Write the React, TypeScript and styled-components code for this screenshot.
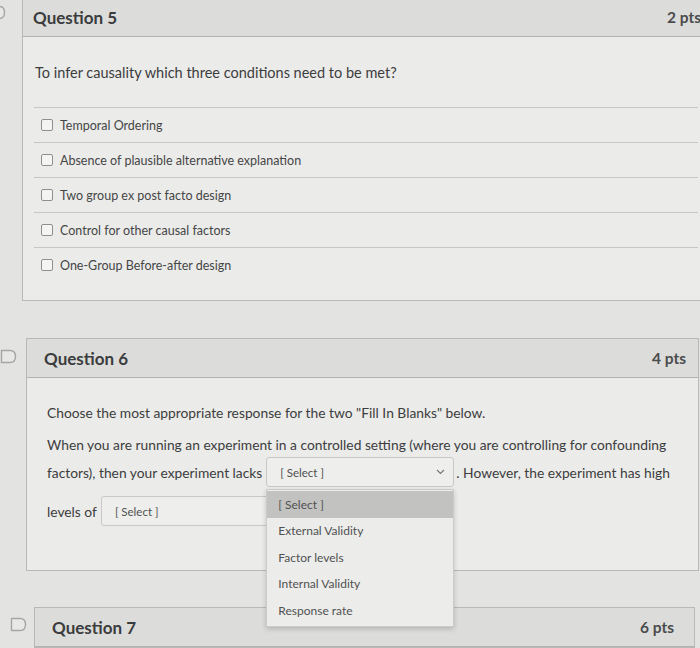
import { createGlobalStyle } from "styled-components"
import styled from "styled-components"

const GlobalStyle = createGlobalStyle`
  html, body {
    margin: 0;
    padding: 0;
    background: #e3e3e1;
    overflow: hidden;
  }
  body {
    font-family: Lato, "Open Sans", sans-serif;
    color: #3a3b3c;
  }
`

const Page = styled.div`
  width: 700px;
  height: 648px;
  overflow: hidden;
`

const QuestionRow = styled.div<{ $flagLeft: number; $flagTop: number; $gap: number; $top: number }>`
  display: flex;
  align-items: flex-start;
  margin-top: ${(p) => p.$top}px;
  margin-left: ${(p) => p.$flagLeft}px;

  & > svg {
    flex: none;
    margin-top: ${(p) => p.$flagTop}px;
    margin-right: ${(p) => p.$gap}px;
  }
`

const Card = styled.div<{ $width: number }>`
  flex: none;
  width: ${(p) => p.$width}px;
  border: 1px solid #b8b8b6;
  background: #ebebe9;
`

const Header = styled.div<{ $padLeft: number; $padRight: number }>`
  height: 38px;
  display: flex;
  align-items: center;
  justify-content: space-between;
  padding: 0 ${(p) => p.$padRight}px 0 ${(p) => p.$padLeft}px;
  background: #dcdcda;
  border-bottom: 1px solid #b3b3b1;
`

const Title = styled.div`
  font-size: 17px;
  font-weight: 700;
  color: #3b3c3d;
`

const Points = styled.div`
  font-size: 15.5px;
  font-weight: 700;
  color: #4b4c4d;
`

const Body5 = styled.div`
  padding: 24px 15px 18px 11px;
`

const Prompt = styled.div`
  height: 24px;
  line-height: 24px;
  font-size: 14.5px;
  color: #3c3d3e;
  margin-bottom: 22px;
  padding-left: 1px;
`

const Option = styled.label`
  display: flex;
  align-items: center;
  height: 35px;
  border-top: 1px solid #c6c6c4;
  padding-left: 7px;
  font-size: 12.5px;
  color: #454647;
  box-sizing: border-box;
`

const Box = styled.span`
  width: 10px;
  height: 10px;
  border: 1px solid #8e8f90;
  border-radius: 2px;
  background: #f4f4f2;
  margin-right: 7px;
`

const Body6 = styled.div`
  padding: 22px 20px 44px 20px;
  font-size: 13.8px;
  color: #3c3d3e;
`

const Line = styled.div<{ $h: number; $mb: number }>`
  display: flex;
  align-items: center;
  height: ${(p) => p.$h}px;
  margin-bottom: ${(p) => p.$mb}px;
  white-space: nowrap;
`

const SelectWrap = styled.div`
  position: relative;
  margin: 0 2px 0 4px;
`

const Select = styled.div`
  width: 188px;
  height: 30px;
  box-sizing: border-box;
  display: flex;
  align-items: center;
  justify-content: space-between;
  padding: 0 8px 0 13px;
  border: 1px solid #c8c8c6;
  border-radius: 3px;
  background: #eeeeec;
  font-size: 11.5px;
  color: #505152;
`

const Menu = styled.div`
  position: absolute;
  top: 32px;
  left: 0;
  width: 186px;
  z-index: 5;
  background: #ececea;
  border: 1px solid #cbcbc9;
  box-shadow: 0 2px 5px rgba(0, 0, 0, 0.18);
  padding: 1px 0 2px;
`

const MenuItem = styled.div<{ $active?: boolean }>`
  height: 26.5px;
  display: flex;
  align-items: center;
  padding-left: 11px;
  font-size: 12px;
  color: #505152;
  background: ${(p) => (p.$active ? "#c2c2c0" : "transparent")};
`

const Flag = () => (
  <svg width="17" height="15" viewBox="0 0 17 15">
    <path
      d="M1.5 1.5 H10 Q15.5 1.5 15.5 7.5 Q15.5 13.5 10 13.5 H1.5 Z"
      fill="#e8e8e6"
      stroke="#a5a6a7"
      strokeWidth="1.4"
      strokeLinejoin="round"
    />
  </svg>
)

const Chevron = () => (
  <svg width="9" height="6" viewBox="0 0 9 6">
    <path d="M1 1 L4.5 4.5 L8 1" fill="none" stroke="#777" strokeWidth="1.2" />
  </svg>
)

const options = [
  "Temporal Ordering",
  "Absence of plausible alternative explanation",
  "Two group ex post facto design",
  "Control for other causal factors",
  "One-Group Before-after design",
]

const choices = ["External Validity", "Factor levels", "Internal Validity", "Response rate"]

export default function App() {
  return (
    <Page>
      <GlobalStyle />
      <QuestionRow $top={-3} $flagLeft={-11} $flagTop={8} $gap={16}>
        <Flag />
        <Card $width={690}>
          <Header $padLeft={10} $padRight={12}>
            <Title>Question 5</Title>
            <Points>2 pts</Points>
          </Header>
          <Body5>
            <Prompt>To infer causality which three conditions need to be met?</Prompt>
            {options.map((o) => (
              <Option key={o}>
                <Box />
                {o}
              </Option>
            ))}
          </Body5>
        </Card>
      </QuestionRow>

      <QuestionRow $top={37} $flagLeft={0} $flagTop={11} $gap={9}>
        <Flag />
        <Card $width={671}>
          <Header $padLeft={17} $padRight={12}>
            <Title>Question 6</Title>
            <Points>4 pts</Points>
          </Header>
          <Body6>
            <Line $h={24} $mb={10}>Choose the most appropriate response for the two "Fill In Blanks" below.</Line>
            <Line $h={20} $mb={3}>
              When you are running an experiment in a controlled setting (where you are controlling for confounding
            </Line>
            <Line $h={30} $mb={9}>
              factors), then your experiment lacks
              <SelectWrap>
                <Select>
                  [ Select ]
                  <Chevron />
                </Select>
                <Menu>
                  <MenuItem $active>[ Select ]</MenuItem>
                  {choices.map((c) => (
                    <MenuItem key={c}>{c}</MenuItem>
                  ))}
                </Menu>
              </SelectWrap>
              . However, the experiment has high
            </Line>
            <Line $h={30} $mb={0}>
              levels of
              <SelectWrap>
                <Select>
                  [ Select ]
                  <Chevron />
                </Select>
              </SelectWrap>
            </Line>
          </Body6>
        </Card>
      </QuestionRow>

      <QuestionRow $top={36} $flagLeft={10} $flagTop={10} $gap={7}>
        <Flag />
        <Card $width={659}>
          <Header $padLeft={17} $padRight={20}>
            <Title>Question 7</Title>
            <Points>6 pts</Points>
          </Header>
        </Card>
      </QuestionRow>
    </Page>
  )
}
